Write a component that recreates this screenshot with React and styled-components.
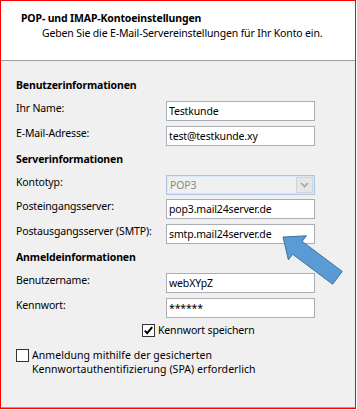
import React from 'react';
import styled, { createGlobalStyle } from 'styled-components';

const GlobalStyle = createGlobalStyle`
  html, body {
    margin: 0;
    padding: 0;
    background: #fff;
  }
  body {
    font-family: "Noto Sans", "Liberation Sans", sans-serif;
    font-size: 10.5px;
    letter-spacing: -0.15px;
    color: #000;
  }
`;

const Frame = styled.div`
  position: relative;
  box-sizing: border-box;
  width: 356px;
  height: 409px;
  border: 1px solid #ff0000;
  display: flex;
  flex-direction: column;
  background: #fff;
`;

const Header = styled.div`
  box-sizing: border-box;
  height: 60px;
  padding: 10px 0 0 20px;
  border-bottom: 1px solid #a0a0a0;
  line-height: 15px;
`;

const Title = styled.div`
  font-weight: 700;
`;

const Subtitle = styled.div`
  margin-left: 21px;
`;

const Body = styled.div`
  flex: 1;
  background: #f0f0f0;
  border-bottom: 1px solid #a0a0a0;
  padding: 11px 0 0 15px;
`;

const SectionTitle = styled.div`
  font-weight: 700;
  line-height: 14px;
  margin: 6px 0 9px;
`;

const Row = styled.div`
  display: grid;
  grid-template-columns: 150px 149px;
  height: 20px;
  margin-bottom: ${p => p.$gap}px;
`;

const Label = styled.div`
  line-height: 14px;
  white-space: nowrap;
`;

const Field = styled.input`
  box-sizing: border-box;
  width: 149px;
  height: 20px;
  margin: 0;
  padding: 0 2px;
  border: 1px solid #abadb3;
  background: #fff;
  font: inherit;
  letter-spacing: inherit;
  color: #000;
  outline: none;
`;

const Select = styled.div`
  box-sizing: border-box;
  width: 149px;
  height: 20px;
  display: flex;
  align-items: center;
  padding-left: 3px;
  border: 1px solid #a9c6e8;
  box-shadow: inset 0 0 0 1px #dde8f5;
  background: #f0f0f0;
  color: #8a8a8a;
`;

const DropButton = styled.div`
  box-sizing: border-box;
  margin-left: auto;
  margin-right: 1px;
  width: 17px;
  height: 16px;
  display: flex;
  align-items: center;
  justify-content: center;
  background: #e6e6e6;
  border: 1px solid #d4d4d4;
`;

const CheckRow = styled.div`
  display: flex;
  align-items: ${p => (p.$top ? 'flex-start' : 'center')};
  gap: 3px;
  margin: ${p => p.$mt}px 0 0 ${p => p.$indent}px;
  line-height: ${p => p.$lh}px;
`;

const CheckText = styled.div`
  letter-spacing: ${p => p.$spacing ?? -0.15}px;
`;

const Box = styled.div`
  box-sizing: border-box;
  flex: none;
  width: 13px;
  height: 13px;
  border: 1px solid #333;
  background: #fff;
  display: flex;
  align-items: center;
  justify-content: center;
`;

const Arrow = styled.svg`
  position: absolute;
  left: 269px;
  top: 224px;
  pointer-events: none;
`;

const Chevron = () => (
  <svg width="9" height="6" viewBox="0 0 9 6">
    <polyline points="1,1 4.5,4.5 8,1" fill="none" stroke="#a6a6a6" strokeWidth="1.6" />
  </svg>
);

const Tick = () => (
  <svg width="11" height="11" viewBox="0 0 11 11">
    <polyline points="1.8,5.6 4.2,8.2 9.2,2.2" fill="none" stroke="#000" strokeWidth="2" />
  </svg>
);

const FormRow = ({ label, value, gap = 5 }) => (
  <Row $gap={gap}>
    <Label>{label}</Label>
    <Field readOnly defaultValue={value} />
  </Row>
);

const App = () => (
  <>
    <GlobalStyle />
    <Frame>
      <Header>
        <Title>POP- und IMAP-Kontoeinstellungen</Title>
        <Subtitle>Geben Sie die E-Mail-Servereinstellungen für Ihr Konto ein.</Subtitle>
      </Header>
      <Body>
        <SectionTitle>Benutzerinformationen</SectionTitle>
        <FormRow label="Ihr Name:" value="Testkunde" />
        <FormRow label="E-Mail-Adresse:" value="test@testkunde.xy" gap={0} />

        <SectionTitle>Serverinformationen</SectionTitle>
        <Row $gap={4}>
          <Label>Kontotyp:</Label>
          <Select>
            POP3
            <DropButton><Chevron /></DropButton>
          </Select>
        </Row>
        <FormRow label="Posteingangsserver:" value="pop3.mail24server.de" />
        <FormRow label="Postausgangsserver (SMTP):" value="smtp.mail24server.de" gap={0} />

        <SectionTitle>Anmeldeinformationen</SectionTitle>
        <FormRow label="Benutzername:" value="webXYpZ" />
        <FormRow label="Kennwort:" value="******" gap={0} />

        <CheckRow $mt={5} $indent={126} $lh={14}>
          <Box><Tick /></Box>
          <CheckText>Kennwort speichern</CheckText>
        </CheckRow>
        <CheckRow $top $mt={12} $indent={0} $lh={13.5}>
          <Box />
          <CheckText $spacing={0.05}>
            Anmeldung mithilfe der gesicherten<br />
            Kennwortauthentifizierung (SPA) erforderlich
          </CheckText>
        </CheckRow>
      </Body>
      <Arrow width="80" height="70" viewBox="270 225 80 70">
        <polygon
          points="283,237 306.4,235.8 302.2,241.4 342.2,271.4 332.6,284.2 292.6,254.2 288.4,259.8"
          fill="#5b9bd5"
          stroke="#41719c"
          strokeWidth="1"
          strokeLinejoin="miter"
        />
      </Arrow>
    </Frame>
  </>
);

export default App;
